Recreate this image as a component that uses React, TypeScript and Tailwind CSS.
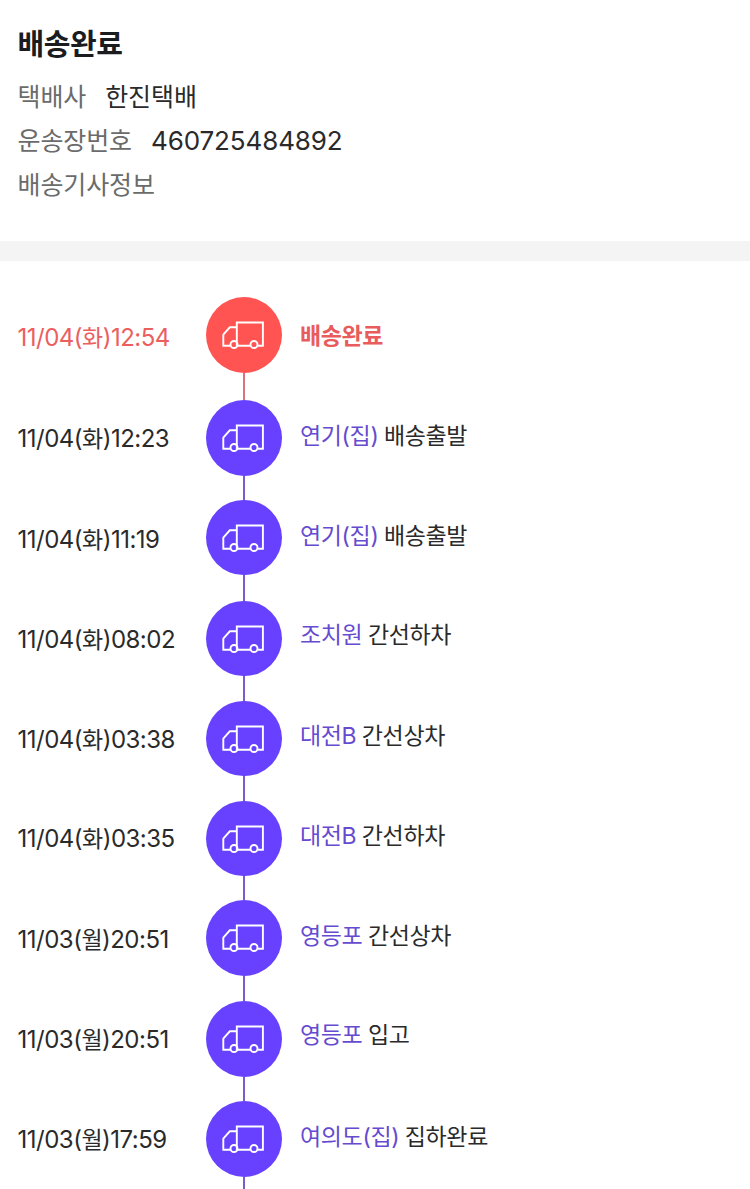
type Step = {
  date: string
  day: string
  clock: string
  place?: string
  suffix?: string
  state: string
  height: string
  timeTop: string
  textTop: string
}

const steps: Step[] = [
  { date: '11/04', day: '화', clock: '12:54', state: '배송완료', height: 'h-[103px]', timeTop: 'pt-[22.5px]', textTop: 'pt-[20.5px]' },
  { date: '11/04', day: '화', clock: '12:23', place: '연기', suffix: '(집)', state: '배송출발', height: 'h-[99.5px]', timeTop: 'pt-[20.5px]', textTop: 'pt-[17.5px]' },
  { date: '11/04', day: '화', clock: '11:19', place: '연기', suffix: '(집)', state: '배송출발', height: 'h-[101px]', timeTop: 'pt-[22px]', textTop: 'pt-[18px]' },
  { date: '11/04', day: '화', clock: '08:02', place: '조치원', state: '간선하차', height: 'h-[100px]', timeTop: 'pt-[21px]', textTop: 'pt-[16px]' },
  { date: '11/04', day: '화', clock: '03:38', place: '대전', suffix: 'B', state: '간선상차', height: 'h-[100px]', timeTop: 'pt-[21px]', textTop: 'pt-[17px]' },
  { date: '11/04', day: '화', clock: '03:35', place: '대전', suffix: 'B', state: '간선하차', height: 'h-[99.5px]', timeTop: 'pt-[20px]', textTop: 'pt-[17px]' },
  { date: '11/03', day: '월', clock: '20:51', place: '영등포', state: '간선상차', height: 'h-[101px]', timeTop: 'pt-[22px]', textTop: 'pt-[17.5px]' },
  { date: '11/03', day: '월', clock: '20:51', place: '영등포', state: '입고', height: 'h-[100px]', timeTop: 'pt-[20.5px]', textTop: 'pt-[15.5px]' },
  { date: '11/03', day: '월', clock: '17:59', place: '여의도', suffix: '(집)', state: '집하완료', height: 'h-[87.6px]', timeTop: 'pt-[20.5px]', textTop: 'pt-[17.5px]' },
]

function TruckIcon() {
  return (
    <svg className="mr-[2px] h-[28px] w-[42px]" viewBox="0 0 42 28" fill="none" stroke="white" strokeWidth="1.9">
      <path d="M8.3 24.7H1.3V13.5L7.8 6.3H14.8M15.6 24.7H14.8V1.5H40.9V24.7H35.7M15.6 24.7H28.3" />
      <circle cx="12" cy="23.5" r="3.5" />
      <circle cx="32" cy="23.5" r="3.5" />
    </svg>
  )
}

function StepRow({ step, done }: { step: Step, done: boolean }) {
  return (
    <li className={`flex ${step.height}`}>
      <p className={`w-[188.4px] text-[24px] leading-[36px] tracking-[-0.52px] whitespace-nowrap ${step.timeTop} ${done ? 'text-[#eb5f5f]' : 'text-[#2a2a2a]'}`}>
        {step.date}(<span className="text-[23px]">{step.day}</span>){step.clock}
      </p>
      <div className="flex w-[75.6px] flex-col items-center">
        <div className={`flex h-[75.6px] w-[75.6px] shrink-0 items-center justify-center rounded-full ${done ? 'bg-[#ff5452]' : 'bg-[#6741ff]'}`}>
          <TruckIcon />
        </div>
        <div className={`w-[1.5px] grow ${done ? 'bg-[#d8757a]' : 'bg-[#7a5ccb]'}`}></div>
      </div>
      <p className={`ml-[18.4px] text-[23px] leading-[36px] tracking-[-0.36px] whitespace-nowrap ${step.textTop} ${done ? 'font-bold text-[#e85c5c]' : 'text-[#2a2a2a]'}`}>
        {step.place && (
          <span className="mr-[5.5px] text-[#664bd0]">{step.place}{step.suffix}</span>
        )}
        {step.state}
      </p>
    </li>
  )
}

export default function App() {
  return (
    <main className="h-[1189px] overflow-hidden bg-white font-['Inter','Noto_Sans_CJK_KR',sans-serif] text-[#2a2a2a]">
      <header className="h-[241px] px-[17.5px] pt-[23px]">
        <h1 className="text-[29px] leading-[44px] font-bold tracking-[-0.45px] text-[#1a1c20]">배송완료</h1>
        <dl className="mt-[8px] text-[25px] leading-[44px] tracking-[-0.1px]">
          <div className="flex h-[44px] gap-[19px]">
            <dt className="text-[#6b6b6b]">택배사</dt>
            <dd>한진택배</dd>
          </div>
          <div className="flex h-[44px] gap-[19px]">
            <dt className="text-[#6b6b6b]">운송장번호</dt>
            <dd className="text-[26px] tracking-[-0.12px]">460725484892</dd>
          </div>
          <div className="flex h-[44px]">
            <dt className="text-[#6b6b6b]">배송기사정보</dt>
          </div>
        </dl>
      </header>
      <div className="h-[20px] bg-[#f4f4f4]"></div>
      <ol className="pt-[36.4px] pl-[17.6px]">
        {steps.map((step, i) => (
          <StepRow key={i} step={step} done={i === 0} />
        ))}
      </ol>
    </main>
  )
}
